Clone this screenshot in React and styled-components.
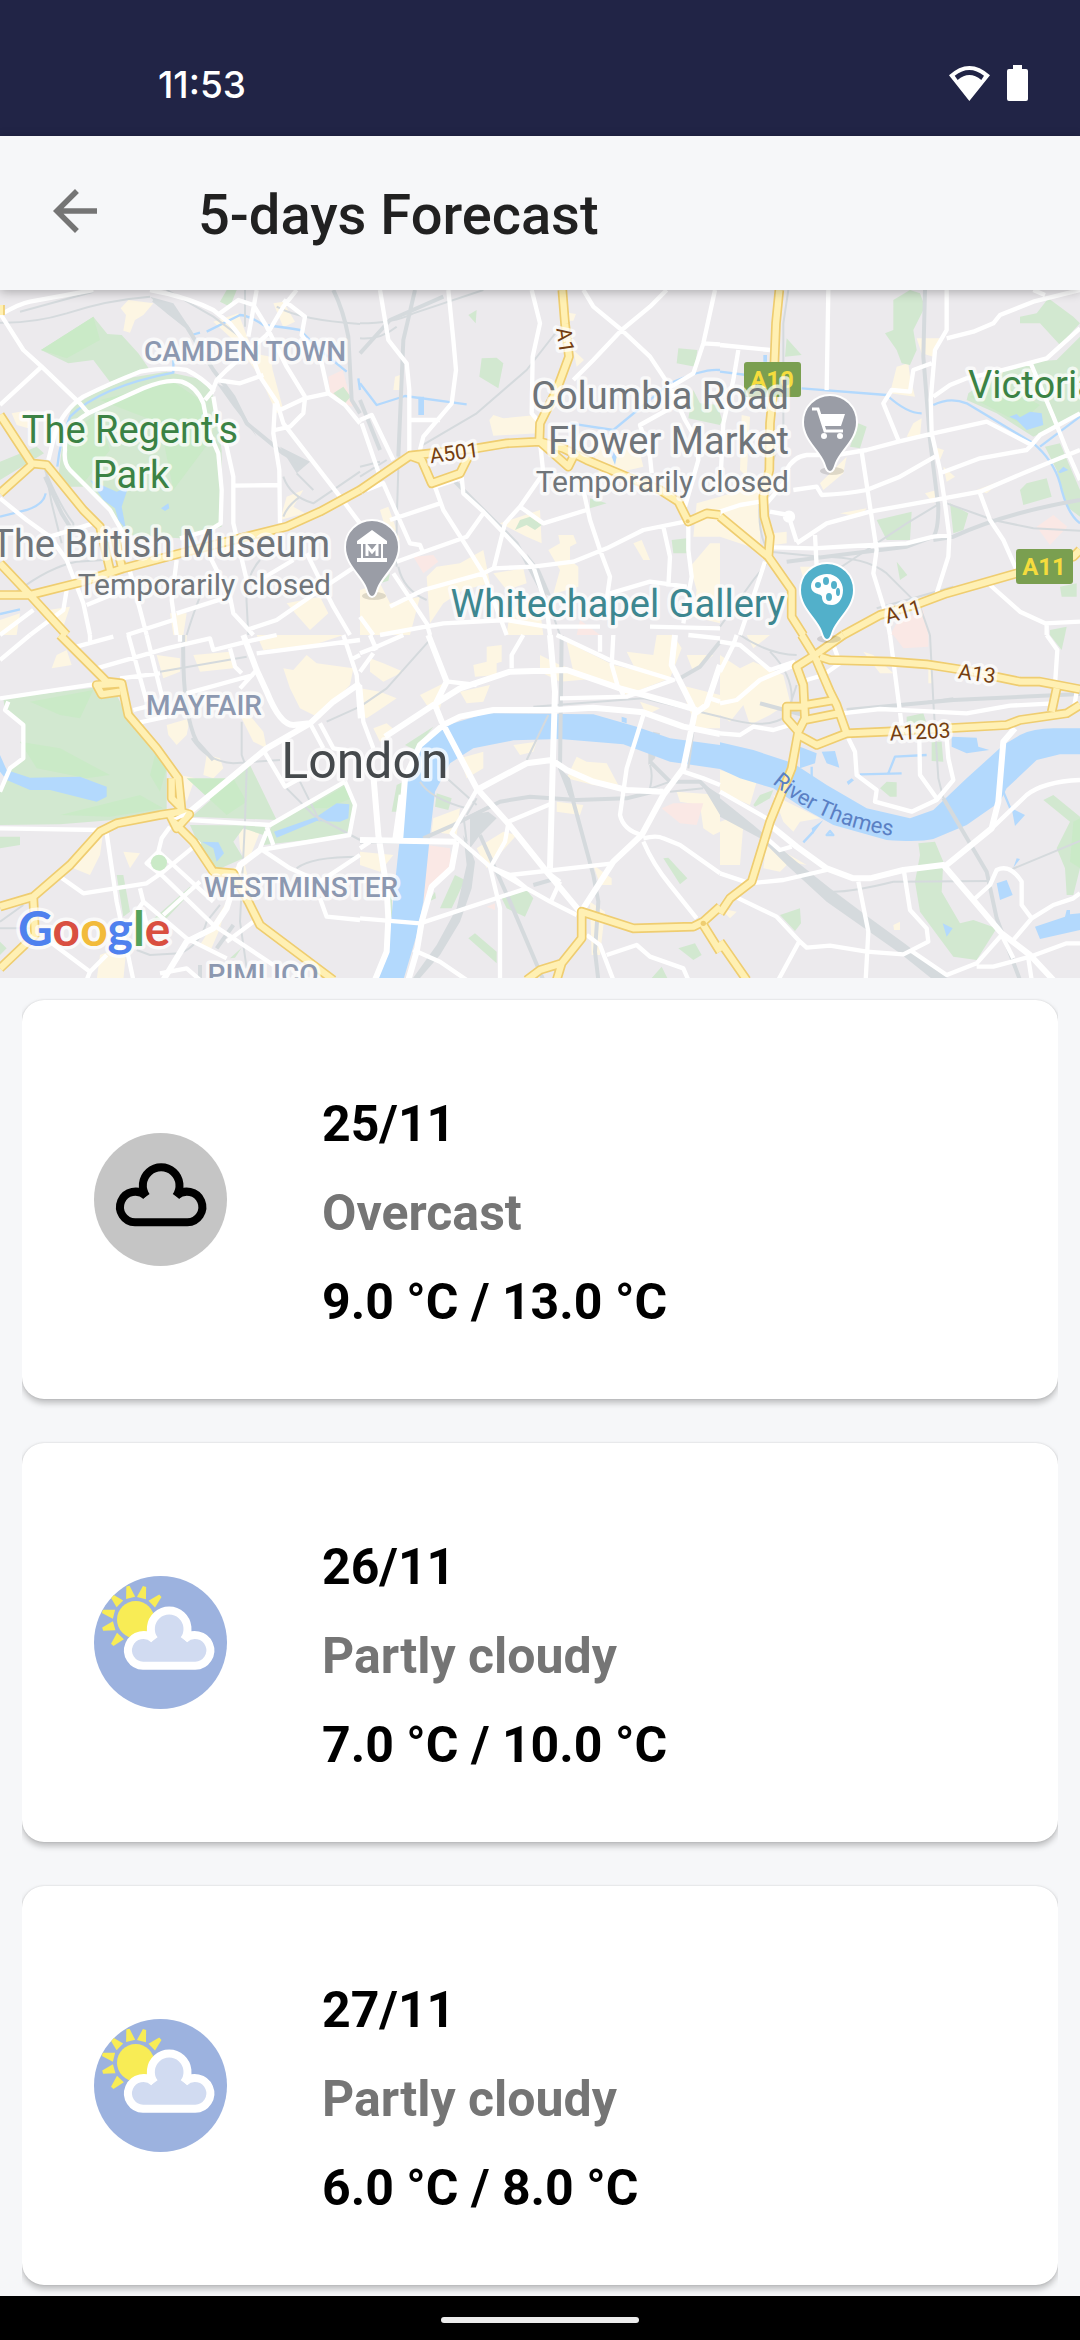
import React from "react";
import styled, { createGlobalStyle } from "styled-components";

const GlobalStyle = createGlobalStyle`
  * { box-sizing: border-box; }
  body {
    margin: 0;
    background: #f6f7f9;
    font-family: Roboto, "Noto Sans", sans-serif;
  }
`;

const Screen = styled.div`
  display: flex;
  flex-direction: column;
  min-height: 100vh;
  background: #f6f7f9;
`;

const StatusBar = styled.div`
  display: flex;
  align-items: flex-end;
  justify-content: space-between;
  height: 136px;
  padding: 0 52px 32px 158px;
  background: #212446;
  color: #fff;
`;

const Clock = styled.time`
  font-family: Inter, Roboto, sans-serif;
  font-size: 37px;
  font-weight: 500;
  line-height: 38px;
`;

const StatusIcons = styled.div`
  display: flex;
  align-items: center;
  gap: 17px;
  height: 42px;
`;

const AppBar = styled.header`
  display: flex;
  align-items: center;
  gap: 90px;
  height: 154px;
  padding: 0 42px;
  background: #f6f7f9;
  box-shadow: 0 2px 10px rgba(0, 0, 0, 0.28);
  position: relative;
  z-index: 1;
`;

const BackButton = styled.button`
  display: flex;
  padding: 0 0 4px;
  border: 0;
  background: none;
  color: #757575;
`;

const Title = styled.h1`
  margin: 0;
  padding-top: 4px;
  color: #212121;
  font-size: 56px;
  font-weight: 500;
  line-height: 64px;
`;

const Content = styled.main`
  display: flex;
  flex: 1;
  flex-direction: column;
`;

const MapImage = styled.svg`
  display: block;
  width: 100%;
  height: auto;
  background: #eceaed;
`;

const Place = styled.text`
  font-family: Roboto, "Noto Sans", sans-serif;
  font-size: ${(p) => p.$size || 38}px;
  font-weight: ${(p) => p.$weight || 400};
  fill: ${(p) => p.$color || "#70757a"};
  text-anchor: ${(p) => p.$anchor || "middle"};
  paint-order: stroke;
  stroke: ${(p) => (p.$plain ? "none" : "rgba(255, 255, 255, 0.72)")};
  stroke-width: 7px;
  stroke-linejoin: round;
`;

const Logo = styled(Place)`
  font-family: Lato, "Open Sans", sans-serif;
`;

const DayList = styled.ul`
  display: flex;
  flex: 1;
  flex-direction: column;
  gap: 44px;
  margin: 0;
  padding: 22px 22px 11px;
  list-style: none;
`;

const DayCard = styled.li`
  display: flex;
  align-items: center;
  gap: 95px;
  padding-left: 72px;
  border-radius: 22px;
  background: #fff;
  box-shadow: 0 4px 6px rgba(0, 0, 0, 0.24), 0 0 2px rgba(0, 0, 0, 0.14);
  clip-path: inset(-2px 0 -11px 0);
`;

const DayText = styled.div`
  display: flex;
  flex-direction: column;
  gap: 30px;
  padding: 95px 0 67px;
`;

const Line = styled.p`
  margin: 0;
  color: ${(p) => (p.$muted ? "#757575" : "#000")};
  font-size: 50px;
  font-weight: 700;
  line-height: 59px;
`;

const NavBar = styled.footer`
  display: flex;
  align-items: center;
  justify-content: center;
  height: 44px;
  padding-top: 4px;
  background: #000;
`;

const HomePill = styled.button`
  width: 198px;
  height: 6px;
  padding: 0;
  border: 0;
  border-radius: 3px;
  background: #ececec;
`;

/* Map geometry, split in six districts. Each one has its own origin, in thirds of a map unit. */
const DISTRICTS = [
  {
    x: 0,
    y: 0,
    beige:
      "M362,55L385,30L460,40L430,75L405,90L390,128L370,122L378,75Z M640,95L715,70L760,190L812,200L818,240L850,360L830,370L780,260L700,150Z M820,40L850,35L885,95L850,112Z M860,620L910,600L880,650L915,670L840,690Z M35,370L90,360L85,415L50,405Z M860,940L960,920L985,970L930,1020L890,975Z M145,960L210,950L190,1010Z M510,970L560,970L550,1035L520,1035Z M600,760L710,740L725,790L620,800Z M0,990L60,970L50,1035L0,1035Z",
    pink: "M985,260L1028,240L1058,350L1030,340L990,310Z",
    green:
      "M123,180L280,80L322,132L365,135L415,190L448,238L330,276L280,210L205,220Z M175,560L190,440L215,350L300,300L400,262L500,245L590,265L635,300L650,380L665,480L665,710L540,745L380,735L340,670L250,590L190,590Z M0,515L110,470L132,490L0,570Z M660,35L680,0L710,0L690,50Z M1000,310L1030,290L1052,320L1035,340Z",
    bright: "M123,180L280,80L300,150L200,205Z M300,330L520,275L600,330L640,440L520,600L480,400Z M200,440L290,370L330,480L250,580L205,530Z",
    water: "M270,570L350,605L385,590L365,650L378,718L355,690L345,655L310,630Z M483,655L505,640L508,655L495,663Z",
    stream:
      "M0,680L60,665Q130,650 137,610 M172,530Q180,450 210,380Q300,290 520,248V210 M575,135L600,128 M620,125Q690,90 720,75Q750,78 790,105Q860,112 900,120L960,180L1040,245 M0,972L60,958 M1080,300L1075,265",
    rail:
      "M0,98Q100,100 200,70Q320,30 450,20 M60,65L280,5 M500,0L640,80L720,140 M735,0V110 M830,50Q900,90 1080,102 M135,530L155,640L185,760 M135,540Q180,650 220,700V740 M850,560Q870,620 940,640Q1000,600 1080,545 M850,680Q860,650 900,620 M50,905Q150,830 230,815L310,810 M780,810Q735,860 740,940L745,1035 M560,1035Q580,970 600,920 M890,550L940,600",
    railWide: "M460,30L560,110L640,240L700,320L740,400L850,490L900,520 M1000,0Q1030,60 1045,140L1055,330L1080,370 M135,560L185,670L225,735",
    railFill: "M840,470L930,515L890,550Z M450,20L520,40L580,130L500,70Z M650,280L690,300L770,440L700,350Z",
    road:
      "M0,75Q60,40 90,35L280,0 M450,0Q560,20 640,60L690,100L745,170L780,260L830,335L850,400L1020,620L1080,700 M660,70L715,30L760,45L800,110L860,230L915,320 M770,0L745,140 M890,0L850,50L800,135L680,240L650,270L635,310 M850,30L915,80L905,135L965,220L985,310L1035,345L1080,400 M650,270L720,280L790,255 M825,420L870,410L910,370L915,325L985,310 M915,325L840,360 M825,340L820,430L838,540L840,700 M700,587L835,585 M0,345L125,230 M0,70L70,180L125,230L240,340L265,370 M145,510L165,430Q190,360 250,320Q330,280 420,245Q500,230 560,240Q610,265 640,300L615,330 M640,320L650,380L680,470L700,560L700,700L740,870 M265,370Q330,340 430,295Q500,265 545,275Q590,290 610,340L625,420L655,490L665,600L662,700L630,720L540,745 M265,370Q190,410 195,480Q190,520 210,540L330,660L370,730 M0,625L80,690L150,740L200,810L250,940L270,1035 M150,740L280,700 M390,845L440,1035 M260,945L370,900 M530,810L515,930L530,1035 M530,970L640,935L690,920 M380,1035L520,990 M690,920L700,970L760,1035 M740,1020L830,990L960,900L1080,820 M780,870L880,810 M920,790L1000,950L1050,1035 M90,1035L190,960L200,900 M0,1035L100,960 M630,800L690,920",
    major:
      "M0,375L95,520L140,525L250,660L300,710L330,840 M0,610L95,525 M0,915H90L250,875L370,835L540,790L700,750L860,710L960,665L1080,600 M0,820L90,915L200,1035 M345,740L365,830 M0,45V75",
  },
  {
    x: 1080,
    y: 0,
    beige:
      "M388,390L400,375L430,385L530,375L535,430L400,437Z M105,260L120,255L125,300L100,300Z M625,68L648,72L640,92L620,92Z M640,180L672,210L650,230Z M200,860L230,830L300,820L370,780L390,880L310,900L250,940L210,1000Z M565,780L600,760L595,735L640,735L650,760L630,770V810L655,830V890L580,912L600,840Z M400,850L490,835L500,880L440,900Z M0,900L60,880L90,940L180,920L150,1035H0Z M820,760L845,750L870,810L850,810Z M990,830L1050,760L1080,760V1000L1000,980L1010,900Z M690,440L830,450L850,530L720,560Z M60,660L85,650L120,750L90,760Z M1010,640L1080,620V740L1000,740Z M440,1035L450,960L500,930L540,960L550,1035Z M420,700L540,660L545,760L500,740Z M575,300L600,320L570,340Z",
    pink: "M160,800L220,795L235,815L190,850Z M660,990L720,1035H650Z",
    green:
      "M365,205L410,203L430,220L415,295L358,260Z M325,75L350,60L347,100Z M955,175L1012,180L1005,230L950,220Z M465,720L480,690L510,680L545,705L525,720L500,705Z M690,625L740,640L690,655Z M935,750L980,745V790H940Z M1000,300L1020,340L1080,345V405L985,385Z M60,880L90,850L85,872Z",
    bright: "",
    water: "M175,320H192V375H175Z M735,450L770,500L765,525Z",
    stream: "M0,280L50,345L135,318L320,343 M630,400L760,420L930,280Q1030,235 1080,240",
    rail:
      "M0,100Q100,100 160,70L370,0 M0,145Q60,150 110,110 M180,470L350,370L500,240L570,150L610,100 M0,560L80,510 M115,830Q130,900 200,930 M116,500L110,700V830 M570,950L600,1035 M0,530L60,515",
    railWide: "M0,190L90,90L250,20 M165,0L130,150L115,500 M0,330L60,480 M270,560L470,760L570,950",
    railFill: "M500,790L540,840L575,920L550,910Z",
    road:
      "M60,0L85,150L140,220L148,300V485 M265,0L280,150L288,240L275,340L190,440L180,480 M515,0L540,100L518,200L515,370L540,400 M150,390H240 M0,390L35,375L100,510 M5,400L60,560 M670,0L700,50L785,120L870,200L930,290L975,390L1010,450L1015,510L975,650 M920,0L870,50L785,120L700,210L640,270 M1065,0L1030,160L1000,250L925,295 M1030,160L1080,163 M975,330L840,405L870,500L875,550 M20,600L70,580L150,760L180,765L190,790 M90,690L240,640 M225,590L300,565 M225,590L250,660L320,770L370,850L440,1035 M110,815L180,790L320,740L370,670 M305,560L310,610L370,665L470,770L520,830L560,950L570,1035 M540,455L550,550L480,650L435,700L400,840 M480,650L550,700L680,660 M670,600L690,690L720,780L750,860L740,930 M90,950L190,900L370,850L400,835L520,830L640,815L740,775L850,720L975,695 M910,710L930,800L925,890 M985,700V780L995,860L970,1000 M750,910L870,875L980,890 M60,1035L250,1000L440,990L560,1010L720,1010 M100,850L200,1000L210,1035 M870,1010L1080,1015 M0,980L40,1035",
    major:
      "M0,600L150,497L350,475L440,460L540,455L610,475L680,510L800,560L900,600L955,635L985,695L1040,670L1080,675 M607,0L615,100L627,200L590,300L540,400L538,455 M150,497L185,510L215,580L300,550L325,500 M540,455L625,530L645,490",
  },
  {
    x: 2160,
    y: 0,
    beige:
      "M590,145H660L640,200L605,190Z M530,230L565,220L570,260L585,320L510,310Z M580,400L605,385L600,440H560Z M300,580L380,500L370,550L310,600Z M0,620L120,580V780L0,740Z M65,375L90,380L80,560L60,540Z M240,830L330,830L260,900Z M640,470L672,480L660,510Z M770,600L850,570L800,610Z M360,670L440,655L420,680Z M615,610L650,600L640,640Z M670,530L705,560L680,575Z M155,730L200,725L200,760L160,765Z",
    pink: "M950,710L1000,675L1042,710L990,765Z M510,1035L530,1000L610,960L625,1035Z",
    green:
      "M520,30L570,0L600,10L615,50L580,120L590,180L570,225L545,220L530,180L495,130L520,120Z M200,145L245,195L195,200Z M900,80L950,70L985,25L1060,80L1080,100L1020,165L960,100H900Z M1080,140L1010,210L930,215L840,240L745,310L740,330L830,370L940,440L1080,370Z M975,470L1020,460L1080,600V680L1040,650L1010,540Z M900,600L920,580L980,565L995,620L910,645Z M470,690L575,665L570,750H500Z M690,640L745,670L730,720L700,730Z M530,815L562,855L540,870Z M415,400L440,410L420,475L390,470Z M1020,890L1070,880V920H1025Z M0,370V400L10,405Z M990,1020L1040,1010L1035,1035H990Z",
    bright: "M750,320L840,280L960,345L900,400Z",
    water: "M868,380L890,372L900,382L930,365L965,370L970,405L920,420L890,390Z M1015,545L1030,530L1045,540L1020,550Z M130,195H141V215H130Z",
    stream:
      "M0,245L80,255 M245,295L500,315Q560,370 605,370 M640,345Q690,320 740,340L940,460Q1000,510 1020,580Q1040,670 1080,700 M960,470L1080,380",
    rail:
      "M205,0L190,100V420L150,540 M680,640L820,690L940,715L1080,722 M350,840L560,700L660,640 M150,785L300,800Q440,800 500,850L600,950L630,1035 M120,620Q110,740 150,790 M0,1010L100,870L140,820 M470,955L560,930L700,890",
    railWide: "M615,0L610,200L630,450L655,650Q655,720 640,740L560,770L400,790L200,815 M640,750L700,740Q850,670 1080,630",
    railFill: "",
    road:
      "M0,165L150,180 M55,180L40,270L10,400L5,500L0,600 M325,0L320,300 M680,0V120L645,180L632,330L635,430L660,540L675,640L688,740L685,800L650,910 M680,145L760,125L820,100L840,75L940,35L1080,0 M635,220L580,240L570,305L515,300L490,340L535,450 M640,320L690,285L740,265L830,245L980,205L1080,115 M930,215L1000,380L1040,480L1080,570 M940,0L975,15 M200,540Q220,500 260,495L350,495L440,480L535,455L640,430L800,395L935,465L960,435L1080,370 M425,485L470,780L460,850L500,980L510,1035 M220,600L290,590L305,615Q380,612 440,600L540,560L645,500 M660,550L780,505L920,480L935,465 M0,665L60,645L120,635 M230,760L320,700L450,665L670,625L780,605L920,545L1080,480 M150,665L205,675L230,755 M195,680A12,12 0 1 0 219,680A12,12 0 1 0 195,680 M160,772L280,775L400,768L560,760L640,740L690,735 M285,735L290,830 M780,610L810,690L850,750L890,840 M810,885L900,965L975,1000L1080,995 M980,1000V1035 M135,815L110,890L60,1035 M140,640L200,570L205,530",
    major:
      "M178,0L168,100L160,300L150,400L148,540L130,620L133,680L150,740L145,800 M0,680L145,800L215,900V980L250,1035 M370,1035L480,975L600,940L680,910L890,850L1060,800L1080,780",
  },
  {
    x: 0,
    y: 1035,
    beige:
      "M850,100L880,105L920,60L950,85L1060,100L1050,150L990,210L960,250L900,220L870,160Z M740,230L790,290L800,340L760,320L710,220Z M155,100L170,60L200,45L215,90Z M500,270L570,250L560,300L530,330L505,300Z M620,360L660,370L670,400L640,430L610,420Z M250,650L310,590L300,660L270,720L220,700Z M600,930L680,800L660,880L630,950Z M470,60L540,70V110L490,130Z M715,580L780,590L740,690L720,640Z M300,960L380,930L370,1035H290Z M540,420L585,430L560,500Z M580,60L690,50L700,100L600,110Z M370,650L420,655L390,700Z M650,710L735,690L760,800L700,760Z M540,0H560V30Z M770,0L1030,0L940,30L790,45Z M260,70L290,90L270,110Z",
    pink: "",
    green:
      "M10,190L280,158L350,180L385,250L500,400V530L340,555L180,568L0,570V470L30,400L70,370V270L15,230Z M750,390L830,555L575,545Z M820,560L1035,440L1065,510L1045,600L790,630Z M570,570L800,572L790,600L730,580L700,620L730,670L650,705L600,640Z M0,605L60,605V630L0,640Z M350,720H370L390,830L370,845Z M450,860L570,755L580,765L500,850Z M0,920L20,940L0,960Z M690,970L725,938L705,968Z",
    bright: "M90,200L280,165L240,250L180,240Z M60,320L180,340L330,420L260,430L110,400Z M180,540L420,480L490,520L330,545Z M560,430L700,430L740,500L680,540Z M470,340L500,400L480,470L450,420Z M920,520L1040,450L1055,490L980,520Z",
    water:
      "M0,360L20,405L90,428L240,425L320,455V485L290,500L150,465H90L20,435L0,410Z M822,590L950,545L1010,505L1048,508L1045,550L1020,560L950,558L830,608Z M605,620L655,622L672,655L650,680L640,640Z",
    stream: "",
    rail:
      "M480,110L740,65 M725,260V360L740,400L735,560L720,860L740,1000 M980,260L1080,215 M860,460L940,540L1080,615 M900,440L960,560 M890,700Q930,665 1080,665 M0,880H100 M0,860L70,810 M410,945L450,960L540,955Q600,930 620,860L660,810 M575,310Q620,380 700,385L840,375",
    railWide: "M550,0Q545,230 590,320L640,375 M650,940L700,870 M600,990V1035",
    railFill: "",
    road:
      "M0,190L280,148 M0,75L90,0 M25,200L15,225L70,270V370L30,400L0,470 M230,35L340,5 M290,100L500,40L630,10L640,45L740,20L830,0 M385,0L440,200 M440,0L490,200 M270,0V30 M540,0V20 M360,130L480,115 M400,225L440,215 M420,262L500,245 M560,175L760,120 M690,40L705,95L725,115 M770,105L720,160 M770,55L1080,15 M1030,0L1070,120L1080,250 M1060,70L1080,60 M960,265L1000,340L1060,350 M790,345L855,455L900,430 M930,265L970,340 M1035,440L810,570L570,555 M800,575L820,630 M0,580L300,585 M320,595L350,800L400,1035 M180,725L250,775L440,745L490,710L600,620 M510,575L485,610L475,650L440,685L490,725L640,870L820,990 M475,650L520,690L640,800 M490,840L600,740 M420,760L430,800L560,910L680,970 M1035,440L1065,510L1048,600L780,645 M800,590L780,640L870,700L960,740L1080,660 M150,920L270,1010L320,960 M430,830L440,870 M760,860L680,920 M960,790L980,845L1080,855 M480,1015L560,1000L600,1035 M270,1010L260,1035 M430,800L360,900L360,960",
    roadWide: "M730,0L770,105L800,170Q840,270 880,270L930,265L800,340L570,530 M1080,145L1000,200L930,265 M780,645L720,690L680,820L640,880L560,920L490,1035",
    major:
      "M180,0L300,120L320,140L365,145L385,240L470,340L535,430L545,530L480,540L350,565L300,590L210,690L100,785L0,815 M365,145L290,150L305,178L360,170 M515,430V490L545,520 M540,530L568,538L530,580L510,540 M520,560L580,620L640,710L700,715L745,800L780,870L900,960L1000,1035 M100,790L105,900L0,1000",
  },
  {
    x: 1080,
    y: 1035,
    beige:
      "M340,90L380,80V35L425,30V80L410,85V120L345,125Z M30,70L70,85L130,110L70,140L30,110Z M0,160L60,170L110,190L50,230L20,250L0,240Z M180,180L260,140L240,220L200,210Z M300,170L390,150L370,200L320,205Z M540,60L600,90L720,130L600,140L540,110Z M620,20L760,90L930,130L800,180L740,150L640,110Z M800,50L880,60L890,0H940L965,40L930,130L830,110Z M980,60L1060,60L1000,110Z M300,370L370,350V400L320,430Z M650,365L680,380L740,385L780,460L700,450L620,430Z M460,330L530,320L520,350L480,360Z M0,650L100,660L60,710L0,690Z M220,550L300,520L290,600L215,590Z M350,640L430,590L470,600L380,700Z M590,500L670,510L660,540L590,530Z M950,470L1080,480V590L1060,600L1030,580L1020,510L960,500Z M700,690L755,730V750L720,750Z M690,800L735,830L720,960H695Z M960,150L1080,180V280L1010,280Z M840,200L900,220L860,240Z M40,280L80,265L110,290L60,320Z",
    pink: "M200,630L270,640L275,700L215,750L190,800Z M905,520L940,505L1030,505L1010,570L960,565Z M380,815L405,805V825Z",
    green:
      "M135,330L220,275L165,345Z M110,450L130,440L110,530H95Z M230,475L275,490L265,525L225,515Z M285,720L315,735L275,820H240Z M425,790L500,765L520,790L495,845L440,820Z M910,670L925,668L982,730L960,748Z M325,910L345,895L410,950V985Z M955,940L1005,925L1025,960L1000,975Z M870,1035L905,995L925,1035Z M80,830L95,760L97,850Z M205,800L225,770L228,790Z",
    bright: "",
    water:
      "M55,1035L90,900L95,840L115,650L140,440L165,340L245,275L380,235L700,238L830,275L930,310L1080,330V402L930,380L790,328L600,312L460,316L340,340L270,385L225,470L210,600L190,800L170,900L130,1035Z M785,260V245L800,250V265Z",
    stream: "",
    rail:
      "M0,215L80,160L205,20 M500,375L565,240 M1000,290L985,400 M180,440Q210,490 320,520 M250,420L350,510 M310,540L320,620 M350,490L320,540 M860,465L930,440 M520,215L850,190L1080,245 M930,470L1030,460 M870,460Q880,420 870,390",
    railWide:
      "M190,610L280,570L420,500L510,485L650,495L800,490L900,465 M360,600L450,800L550,1035 M870,380L930,440L1020,440L1080,500 M640,500L600,400L605,0 M640,500L700,720L715,800L705,950L715,1035 M960,130L1020,95L1080,20 M0,620H120 M520,750L590,730",
    railFill:
      "M310,550L390,510L420,500L330,540Z M330,540L385,530L410,550L360,600L330,640Z M310,600L330,640L345,680L335,760L300,860L240,960L175,1035H155L230,930L290,820L320,690Z M880,290L900,295L885,370L865,390L865,340Z M1020,440L1080,480V540Z M600,400L630,430L645,490L625,480Z",
    road:
      "M0,55L50,35L130,0 M50,45L30,0 M0,110L40,55 M265,140L350,150 M490,0L455,60V100 M590,0L760,80L940,135L800,185L600,190 M720,0V50 M760,0L755,90L775,160 M780,160L790,180 M1080,10L985,0 M0,150L10,260L40,340 M850,240L800,400L780,540Q790,585 845,600 M1080,450L1030,430L970,410 M350,465L275,595L390,695L450,720L760,685 M500,760L390,695L420,820V1035 M0,850L180,865L500,760 M450,720L500,760L570,800L650,840 M600,740L575,795 M560,710L600,740 M445,565L435,620L395,690 M445,560L570,508 M850,610Q890,600 910,610L960,630L1080,715 M850,620Q880,690 930,750L1010,850 M160,945L240,980L320,1035 M680,900L720,930L760,1035 M740,960L830,930L870,965L970,1000L985,1035 M0,640L30,620 M1050,190L1080,200",
    roadWide:
      "M205,0L260,140L225,210L245,260L350,460L440,560L560,710L660,830 M75,305L220,210L300,160L450,110L620,105L780,160L960,210L1010,225 M570,0L585,170L578,400L570,700 M945,0L935,90L1005,230L970,400L910,480L845,600L760,680L670,820 M1080,90L1040,210L1005,235 M120,620L135,430L180,330L250,270L300,245L400,225L580,225L700,218L850,232L970,275L1080,297 M105,620L125,480 M350,465L500,385L575,375L620,405L700,440L800,465L910,470 M0,615L290,620 M290,620L275,700L215,755L185,860L170,950L145,1035 M40,420L55,600L80,760L85,850L80,950L45,1035",
    major:
      "M500,1035L540,1005L605,985L665,910V830L820,880L1000,875L1030,860L1080,815 M590,1035L605,985 M1030,870L1080,950",
  },
  {
    x: 2160,
    y: 1035,
    beige:
      "M0,60L60,100L100,80L190,120L210,200L150,240L90,270L70,210L30,260L0,240Z M0,405L110,440L90,510L0,470Z M160,480L300,550L240,560L220,590L190,560Z M0,560L30,550L70,570L60,690L0,690Z M140,620L260,690L210,680L180,710L130,700Z M520,870L540,860V885H522Z M430,50L460,60L520,115H480Z M625,90H637V145H625Z M80,0H150L100,40Z M0,820L50,830L30,850Z",
    pink: "M520,0H625V35L550,40Z",
    green:
      "M595,625L645,620L670,680L665,770L720,865L760,855L830,880L770,975L700,965L600,830L585,740L600,660Z M480,460L500,440L530,442V485H510Z M635,320H665L670,380L635,378Z M100,510L120,480L160,465L150,490L105,515Z M970,495L1000,480L1080,545V700L1060,780H1040L1035,700L1010,640L1050,560Z M180,840L240,820L243,865L225,888Z M560,245L610,235L620,265H560Z M990,0H1035L1025,45Z",
    bright: "M1060,560L1080,550V700L1050,680Z",
    water:
      "M0,322L100,345L220,385L320,450L440,520L570,550L640,525L740,430L850,330L900,300Q940,280 1000,280H1080V358H1020L950,375L860,460L840,500L740,570L640,612Q600,622 500,615L340,570L250,520L160,460L60,430L0,402Z M240,335L290,355L285,385L240,400Z M305,350L345,348L358,398L320,385Z M695,305L770,308L775,335L808,345L740,355L695,335Z M380,440L395,430L402,436L385,450Z M875,520L915,540L885,573Z M830,745L860,735L878,780L840,795Z M945,875L1035,845L1040,825H1050V838L1080,835V885L960,912Z M668,865L698,880L680,905Z M275,580L310,555L278,598Z M890,670L900,672L880,698Z",
    stream: "M420,418L545,415 M505,415L525,365L620,360 M850,470L875,530 M320,600L330,588L340,600Z M275,395V430 M250,622L280,590",
    rail:
      "M630,0L640,200L655,430L670,490 M340,770Q400,770 520,740L810,738 M870,705L1080,618 M0,245Q150,290 200,240L230,150 M60,0Q150,60 230,60 M150,50Q220,120 215,200 M380,235L700,190",
    railWide: "M380,225L700,195L1080,177 M120,205L250,240 M670,490L800,710L830,850L900,1035",
    railFill: "M0,490L100,570L230,680L330,760L450,850L560,930L690,1035H640L540,955L320,800L200,690L120,610L0,545Z",
    road:
      "M0,205L50,195L120,135L225,90 M0,20L60,30L150,105L225,80 M0,110L40,30L50,0 M0,295L60,300L100,275L160,285L210,270 M260,135L310,120L360,85L340,30 M510,0L545,270 M365,235L480,222L640,230L740,235L870,212L1000,205 M980,0L1012,45L1005,150 M385,310L405,350L410,420L470,465L465,500L575,530L650,495L700,435L685,370L680,310 M598,315L600,420L650,490 M1070,170L1060,230 M815,580L920,480Q970,440 1080,435 M0,470L140,550 M140,610L180,645L215,635 M0,715L90,745L190,735L320,705 M45,785L170,845L240,920L260,938L330,932L440,950L550,958L625,920L620,880L570,825L552,710 M240,915L175,1035 M415,740L445,890L437,1035 M570,945L680,1020L770,985L845,900 M770,995H820L930,965L1040,925L1080,925 M760,795L810,750L830,705Q870,685 905,740V810L935,850L1000,810L1060,790L1080,775 M935,850L880,915 M845,900L880,970 M925,970L935,1035",
    roadWide: "M885,280L850,320L835,500L815,580L680,690 M150,570L230,635L320,700L400,730L450,730L550,705L670,690L760,795L845,895L930,960L1000,1035",
    major:
      "M245,0L285,65L330,170L350,210L380,295L290,330L235,300 M370,0L285,60L230,95L250,150L255,250L235,290L215,400L150,560L95,740L30,790L0,835 M255,210L345,195 M255,255L355,235 M235,290L200,250L200,215H255 M300,65L330,75L510,80L620,88L730,105L900,140L960,140L1080,163 M380,295L500,290L860,270L900,255L1040,235L1080,210 M1010,160L995,230 M0,920L80,1035",
  },
];

const LAYERS = [
  { key: "beige", fill: "#fdf6e3" },
  { key: "pink", fill: "#fae8e5" },
  { key: "green", fill: "#d2e8d0" },
  { key: "bright", fill: "#caeac7" },
  { key: "railFill", fill: "#d5dadd" },
  { key: "water", fill: "#b3d9fd" },
  { key: "stream", stroke: "#b3d9fd", width: 7 },
  { key: "rail", stroke: "#d5dadd", width: 6 },
  { key: "railWide", stroke: "#d5dadd", width: 12 },
  { key: "road", stroke: "#fff", width: 13 },
  { key: "roadWide", stroke: "#fff", width: 18 },
  { key: "major", stroke: "#efcd70", width: 29 },
  { key: "major", stroke: "#fff0b3", width: 19 },
];

const GREEN = "#3b8244";
const AREA = "#8c98b0";
const ROUTE = "#743e11";

const ROUTES = [
  { name: "A501", x: 454, y: 170, turn: -8 },
  { name: "A1", x: 566, y: 58, turn: 82 },
  { name: "A11", x: 903, y: 329, turn: -16 },
  { name: "A13", x: 977, y: 391, turn: 8 },
  { name: "A1203", x: 920, y: 449, turn: -3 },
];

const AREAS = [
  { name: "CAMDEN TOWN", x: 245, y: 71 },
  { name: "MAYFAIR", x: 204, y: 425 },
  { name: "WESTMINSTER", x: 301, y: 607 },
  { name: "PIMLICO", x: 263, y: 694 },
];

function Pin({ x, y, color, children }) {
  return (
    <g transform={`translate(${x} ${y})`}>
      <ellipse cx="2" cy="49" rx="12" ry="4" fill="#000" opacity="0.12" />
      <path
        d="M0,50C-3,50 -4,47 -6,41C-11,28 -27,18 -27,0A27,27 0 0 1 27,0C27,18 11,28 6,41C4,47 3,50 0,50Z"
        fill={color}
        stroke="#fff"
        strokeWidth="2"
      />
      {children}
    </g>
  );
}

function RouteBadge({ x, y, name }) {
  return (
    <g>
      <rect x={x} y={y} width="57" height="35" rx="3" fill="#7a9f50" />
      <Place x={x + 28} y={y + 26} $size={24} $weight={700} $color="#f5dc3d" $plain>
        {name}
      </Place>
    </g>
  );
}

function CityMap() {
  return (
    <MapImage viewBox="0 0 1080 688" role="img" aria-label="Map of London">
      <defs>
        <path id="thames" d="M772,493Q822,537 900,547" />
      </defs>
      <g transform="scale(0.333333)" strokeLinejoin="round">
        {LAYERS.map((layer, i) =>
          DISTRICTS.map((d) =>
            d[layer.key] ? (
              <path
                key={`${i}-${d.x}-${d.y}`}
                transform={`translate(${d.x} ${d.y})`}
                d={d[layer.key]}
                fill={layer.fill || "none"}
                stroke={layer.stroke}
                strokeWidth={layer.width}
              />
            ) : null
          )
        )}
        <circle cx="477" cy="1718" r="24" fill="#caeac7" />
        <circle cx="2110" cy="1900" r="8" fill="#efcd70" />
        <circle cx="2063" cy="694" r="6" fill="#efcd70" />
        <path d="M520,1584L545,1572L560,1566L550,1582L530,1590Z" fill="#fff" />
      </g>

      {ROUTES.map((r) => (
        <Place key={r.name} x={r.x} y={r.y} transform={`rotate(${r.turn} ${r.x} ${r.y - 8})`} $size={21} $color={ROUTE}>
          {r.name}
        </Place>
      ))}
      {AREAS.map((a) => (
        <Place key={a.name} x={a.x} y={a.y} $size={28} $weight={500} $color={AREA}>
          {a.name}
        </Place>
      ))}
      <RouteBadge x={744} y={72} name="A10" />
      <RouteBadge x={1016} y={259} name="A11" />

      <Place x="130" y="153" $color={GREEN}>The Regent's</Place>
      <Place x="131" y="198" $color={GREEN}>Park</Place>
      <Place x="968" y="108" $anchor="start" $color={GREEN}>Victoria Park</Place>
      <Place x="330" y="267" $anchor="end">The British Museum</Place>
      <Place x="331" y="305" $size={30} $anchor="end">Temporarily closed</Place>
      <Place x="789" y="119" $anchor="end">Columbia Road</Place>
      <Place x="789" y="164" $anchor="end">Flower Market</Place>
      <Place x="789" y="202" $size={30} $anchor="end">Temporarily closed</Place>
      <Place x="785" y="327" $anchor="end" $color="#3d8790">Whitechapel Gallery</Place>
      <Place x="365" y="488" $size={50} $color="#45494c">London</Place>
      <Place $size={22} $anchor="start" $color="#5a80c4" $plain>
        <textPath href="#thames">River Thames</textPath>
      </Place>

      <Pin x={372} y={257} color="#9a9da6">
        <path d="M-15,-6L0,-17L15,-6V-3H-15Z M-15,11H15V15H-15Z" fill="#fff" />
        <path d="M-10,-3V11M10,-3V11" stroke="#fff" strokeWidth="2" />
        <path d="M-5,9V-1L0,5L5,-1V9" fill="none" stroke="#fff" strokeWidth="3" />
      </Pin>
      <Pin x={830} y={132} color="#9a9da6">
        <path d="M-18,-13H-12L-5,9H13" fill="none" stroke="#fff" strokeWidth="3" />
        <path d="M-10,-8H15L11,4H-6Z" fill="#fff" />
        <circle cx="-6" cy="14" r="3" fill="#fff" />
        <circle cx="10" cy="14" r="3" fill="#fff" />
      </Pin>
      <Pin x={827} y={300} color="#52b0ca">
        <path d="M0,-16C10,-16 16,-8 16,0C16,9 11,15 5,15C-2,15 -5,12 -5,7C-5,3 -16,5 -16,-4C-16,-11 -8,-16 0,-16Z" fill="#fff" />
        <g fill="#52b0ca">
          <ellipse cx="-9" cy="-5" rx="3" ry="3" />
          <ellipse cx="-1" cy="-9" rx="3" ry="4" />
          <ellipse cx="7" cy="-5" rx="3" ry="4" />
          <ellipse cx="11" cy="2" rx="2" ry="4" />
          <ellipse cx="2" cy="7" rx="3" ry="4" />
        </g>
      </Pin>

      <Logo x="18" y="656" $size={48} $weight={700} $anchor="start">
        <tspan fill="#4f81ee">G</tspan>
        <tspan fill="#d94f40">o</tspan>
        <tspan fill="#f2bb3b">o</tspan>
        <tspan fill="#4f81ee">g</tspan>
        <tspan fill="#55a35b">l</tspan>
        <tspan fill="#d94f40">e</tspan>
      </Logo>
    </MapImage>
  );
}

function CloudShape({ stroke, fill, ...rest }) {
  return (
    <g {...rest} strokeWidth="24">
      <path
        d="M228,258A46,46 0 1 0 195,337H352A46,46 0 1 0 319,258A54,54 0 1 0 228,258Z"
        fill={fill}
      />
      <path d="M228,258A46,46 0 1 0 195,337H352A46,46 0 1 0 319,258" fill="none" stroke={stroke} />
      <path d="M229,259A55,55 0 1 1 318,259" fill="none" stroke={stroke} />
    </g>
  );
}

function OvercastIcon() {
  return (
    <svg width="133" height="133" viewBox="72 69 399 399" aria-hidden="true">
      <circle cx="271.5" cy="268.5" r="199.5" fill="#c5c5c5" />
      <CloudShape stroke="#000" fill="#c5c5c5" />
    </svg>
  );
}

const RAYS = [-137, -106, -76, -45, -13, 15, 46];

function PartlyCloudyIcon() {
  return (
    <svg width="133" height="133" viewBox="72 78 399 399" aria-hidden="true">
      <clipPath id="disc">
        <circle cx="271.5" cy="277.5" r="199.5" />
      </clipPath>
      <g clipPath="url(#disc)">
        <rect x="72" y="78" width="399" height="399" fill="#9cb2df" />
        <circle cx="197" cy="209" r="56" fill="#f8ec55" />
        {RAYS.map((angle) => (
          <path key={angle} transform={`translate(197 209) rotate(${angle})`} d="M-14,-67L14,-67L5,-103L-5,-103Z" fill="#f8ec55" />
        ))}
        <CloudShape transform="translate(24 10)" stroke="#fff" fill="#d1dbf1" />
      </g>
    </svg>
  );
}

const DAYS = [
  { date: "25/11", summary: "Overcast", range: "9.0 °C / 13.0 °C", Icon: OvercastIcon },
  { date: "26/11", summary: "Partly cloudy", range: "7.0 °C / 10.0 °C", Icon: PartlyCloudyIcon },
  { date: "27/11", summary: "Partly cloudy", range: "6.0 °C / 8.0 °C", Icon: PartlyCloudyIcon },
];

export default function App() {
  return (
    <Screen>
      <GlobalStyle />
      <StatusBar>
        <Clock>11:53</Clock>
        <StatusIcons>
          <svg width="41" height="35" viewBox="57 45 123 105" aria-hidden="true">
            <path
              fillRule="evenodd"
              d="M118,150L57,73Q118,17 180,73Z M74,74L83,87Q118,57 154,87L162,74Q118,40 74,74Z"
              fill="#fff"
            />
          </svg>
          <svg width="21" height="36" viewBox="0 0 21 36" aria-hidden="true">
            <path d="M6,0H15V4H19A2,2 0 0 1 21,6V34A2,2 0 0 1 19,36H2A2,2 0 0 1 0,34V6A2,2 0 0 1 2,4H6Z" fill="#fff" />
          </svg>
        </StatusIcons>
      </StatusBar>
      <AppBar>
        <BackButton type="button" aria-label="Back">
          <svg width="66" height="66" viewBox="0 0 24 24" fill="currentColor" aria-hidden="true">
            <path d="M20 11H7.830l5.590-5.590L12 4l-8 8 8 8 1.410-1.410L7.830 13H20v-2z" />
          </svg>
        </BackButton>
        <Title>5-days Forecast</Title>
      </AppBar>
      <Content>
        <CityMap />
        <DayList>
          {DAYS.map(({ date, summary, range, Icon }) => (
            <DayCard key={date}>
              <Icon />
              <DayText>
                <Line>{date}</Line>
                <Line $muted>{summary}</Line>
                <Line>{range}</Line>
              </DayText>
            </DayCard>
          ))}
        </DayList>
      </Content>
      <NavBar>
        <HomePill type="button" aria-label="Home" />
      </NavBar>
    </Screen>
  );
}
